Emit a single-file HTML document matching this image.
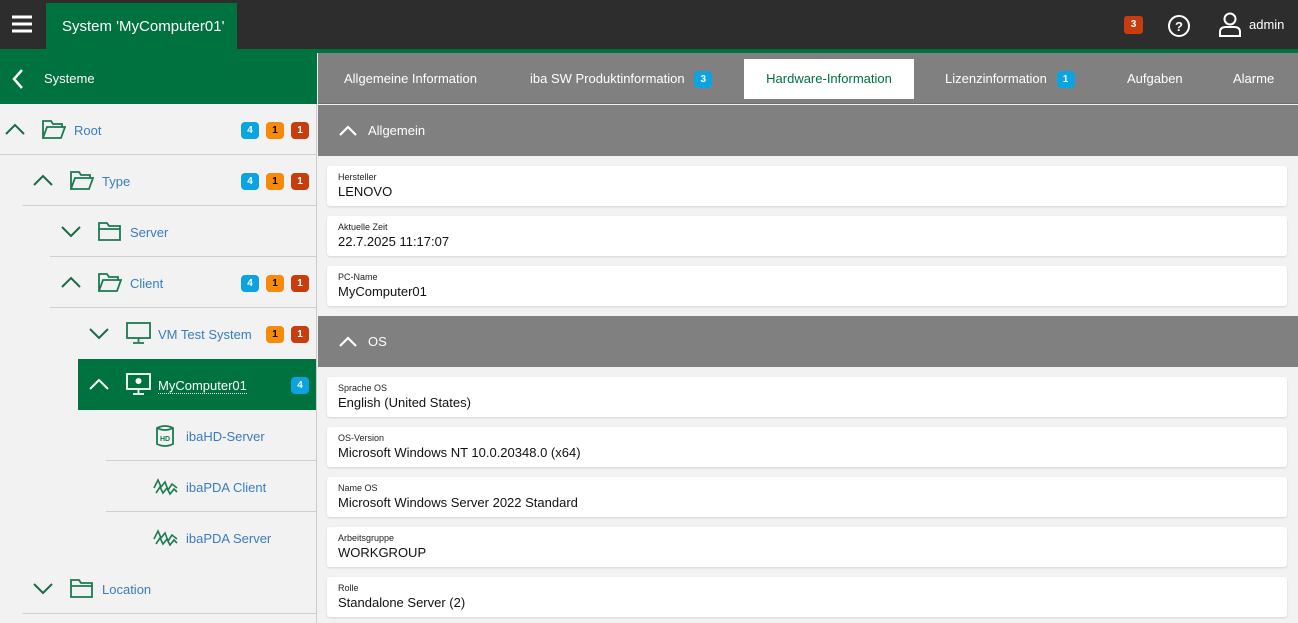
<!DOCTYPE html>
<html><head><meta charset="utf-8"><style>
*{box-sizing:border-box;margin:0;padding:0}
body{width:1298px;height:623px;overflow:hidden;background:#f2f2f2;font-family:"Liberation Sans",sans-serif;position:relative}
.abs{position:absolute}
.top{left:0;top:0;width:1298px;height:49px;background:#2d2d2d}
.gl{left:0;top:49px;width:1298px;height:4px;background:#00723f}
.ttab{left:46px;top:3px;width:191px;height:47px;background:#00723f;color:#fff;font-size:15px;line-height:47px;padding-left:16px}
.sh{left:0;top:53px;width:317px;height:51px;background:#00723f;color:#fff;font-size:13px}
.side{left:0;top:104px;width:317px;height:519px;background:#f2f2f2;border-right:1px solid #ccc}
.row{position:absolute;height:51px;right:0;font-size:13px;color:#3a7cc0}
.row .sep{position:absolute;bottom:0;right:0;height:1px;background:#d0d0d0}
.bd{position:absolute;top:18px;width:18px;height:17px;border-radius:4px;font-size:10px;font-weight:bold;text-align:center;line-height:17px}
.b4{background:#0ba3e0;color:#fff}.bo{background:#f7890b;color:#000}.br{background:#c73d0d;color:#fff}
.tabs{left:318px;top:53px;width:980px;height:51px;background:#808080;border-bottom:1px solid #6e6e6e}
.tab{position:absolute;top:6px;height:40px;line-height:40px;color:#fff;font-size:13px}
.sec{left:318px;width:980px;height:51px;background:#808080;color:#fff;font-size:13px}
.card{left:327px;width:960px;height:40px;background:#fff;border-radius:3px;box-shadow:0 1px 2px rgba(0,0,0,.12)}
.card .l{position:absolute;left:11px;top:6px;font-size:9px;color:#222}
.card .v{position:absolute;left:11px;top:18px;font-size:13px;color:#111}
</style></head><body>
<div class="abs top"></div>
<svg class="abs" style="left:11px;top:15px" width="22" height="18"><g stroke="#fff" stroke-width="3"><line x1="1" y1="2" x2="21" y2="2"/><line x1="1" y1="9" x2="21" y2="9"/><line x1="1" y1="16" x2="21" y2="16"/></g></svg>
<div class="abs ttab">System 'MyComputer01'</div>
<div class="abs" style="left:1124px;top:16px;width:19px;height:18px;background:#c73d0d;border-radius:3px;color:#fff;font-size:10px;font-weight:bold;text-align:center;line-height:18px">3</div>
<svg class="abs" style="left:1167px;top:14px" width="24" height="24"><circle cx="12" cy="12" r="10" fill="none" stroke="#fff" stroke-width="2"/><text x="12" y="17" fill="#fff" font-size="13" font-weight="bold" text-anchor="middle" font-family="Liberation Sans">?</text></svg>
<svg class="abs" style="left:1218px;top:12px" width="24" height="26"><circle cx="12" cy="7" r="5.5" fill="none" stroke="#fff" stroke-width="2"/><path d="M2 24 V20 Q2 15 8 15 H16 Q22 15 22 20 V24 Z" fill="none" stroke="#fff" stroke-width="2"/></svg>
<div class="abs" style="left:1249px;top:17px;color:#fff;font-size:13px">admin</div>
<div class="abs gl"></div>
<div class="abs sh"><svg class="abs" style="left:12px;top:15px" width="12" height="22"><path d="M10 2 L2 11 L10 20" fill="none" stroke="#fff" stroke-width="2.5"/></svg><span class="abs" style="left:44px;top:18px">Systeme</span></div>
<div class="abs side">
<div class="row" style="left:0;top:0"><div class="sep" style="left:0"></div>
<svg class="abs" style="left:5px;top:19px" width="20" height="12"><path d="M1 11 L10 2 L19 11" fill="none" stroke="#1a6a45" stroke-width="2"/></svg>
<svg class="abs" style="left:42px;top:15px" width="24" height="21"><path d="M1 19 V2 H9 L11 5 H20 V8 M1 19 L5 8 H23 L19 19 Z" fill="none" stroke="#1a7a50" stroke-width="1.8"/></svg>
<span class="abs" style="left:74px;top:19px">Root</span>
<div class="bd b4" style="left:241px">4</div><div class="bd bo" style="left:266px">1</div><div class="bd br" style="left:291px">1</div></div>
<div class="row" style="left:0;top:51px"><div class="sep" style="left:22px"></div>
<svg class="abs" style="left:33px;top:19px" width="20" height="12"><path d="M1 11 L10 2 L19 11" fill="none" stroke="#1a6a45" stroke-width="2"/></svg>
<svg class="abs" style="left:70px;top:15px" width="24" height="21"><path d="M1 19 V2 H9 L11 5 H20 V8 M1 19 L5 8 H23 L19 19 Z" fill="none" stroke="#1a7a50" stroke-width="1.8"/></svg>
<span class="abs" style="left:102px;top:19px">Type</span>
<div class="bd b4" style="left:241px">4</div><div class="bd bo" style="left:266px">1</div><div class="bd br" style="left:291px">1</div></div>
<div class="row" style="left:0;top:102px"><div class="sep" style="left:50px"></div>
<svg class="abs" style="left:61px;top:20px" width="20" height="12"><path d="M1 1 L10 10 L19 1" fill="none" stroke="#1a6a45" stroke-width="2"/></svg>
<svg class="abs" style="left:98px;top:15px" width="24" height="21"><path d="M1 19 V2 H9 L11 5 H22 V19 Z M1 8 H22" fill="none" stroke="#1a7a50" stroke-width="1.8"/></svg>
<span class="abs" style="left:130px;top:19px">Server</span></div>
<div class="row" style="left:0;top:153px"><div class="sep" style="left:50px"></div>
<svg class="abs" style="left:61px;top:19px" width="20" height="12"><path d="M1 11 L10 2 L19 11" fill="none" stroke="#1a6a45" stroke-width="2"/></svg>
<svg class="abs" style="left:98px;top:15px" width="24" height="21"><path d="M1 19 V2 H9 L11 5 H20 V8 M1 19 L5 8 H23 L19 19 Z" fill="none" stroke="#1a7a50" stroke-width="1.8"/></svg>
<span class="abs" style="left:130px;top:19px">Client</span>
<div class="bd b4" style="left:241px">4</div><div class="bd bo" style="left:266px">1</div><div class="bd br" style="left:291px">1</div></div>
<div class="row" style="left:0;top:204px">
<svg class="abs" style="left:89px;top:20px" width="20" height="12"><path d="M1 1 L10 10 L19 1" fill="none" stroke="#1a6a45" stroke-width="2"/></svg>
<svg class="abs" style="left:126px;top:14px" width="26" height="22"><rect x="1" y="1" width="23" height="15" fill="none" stroke="#1a7a50" stroke-width="1.8"/><path d="M12.5 16 V20 M7 21 H18" stroke="#1a7a50" stroke-width="1.8"/></svg>
<span class="abs" style="left:158px;top:19px">VM Test System</span>
<div class="bd bo" style="left:266px">1</div><div class="bd br" style="left:291px">1</div></div>
<div class="row" style="left:78px;top:255px;background:#00723f;color:#fff">
<svg class="abs" style="left:11px;top:19px" width="20" height="12"><path d="M1 11 L10 2 L19 11" fill="none" stroke="#fff" stroke-width="2"/></svg>
<svg class="abs" style="left:48px;top:14px" width="26" height="22"><rect x="1" y="1" width="23" height="15" fill="none" stroke="#fff" stroke-width="1.8"/><circle cx="12.5" cy="8" r="3" fill="#fff"/><path d="M12.5 16 V20 M7 21 H18" stroke="#fff" stroke-width="1.8"/></svg>
<span class="abs" style="left:80px;top:19px;border-bottom:1px dotted #fff">MyComputer01</span>
<div class="bd b4" style="left:213px">4</div></div>
<div class="row" style="left:0;top:306px"><div class="sep" style="left:106px"></div>
<svg class="abs" style="left:155px;top:14px" width="20" height="24"><path d="M2 4 Q10 0 18 4 V20 Q10 24 2 20 Z M2 4 Q10 8 18 4" fill="none" stroke="#1a7a50" stroke-width="1.8"/><text x="10" y="17" font-size="7" font-weight="bold" fill="#1a7a50" text-anchor="middle" font-family="Liberation Sans">HD</text></svg>
<span class="abs" style="left:186px;top:19px">ibaHD-Server</span></div>
<div class="row" style="left:0;top:357px"><div class="sep" style="left:106px"></div>
<svg class="abs" style="left:153px;top:17px" width="26" height="18"><path d="M1 10 L5 2 L8 9 L12 4 L15 12 L19 6 L24 10 M3 15 L7 9 L10 15 L14 10 L17 16 L21 11 L24 14" fill="none" stroke="#1a7a50" stroke-width="1.6"/></svg>
<span class="abs" style="left:186px;top:19px">ibaPDA Client</span></div>
<div class="row" style="left:0;top:408px">
<svg class="abs" style="left:153px;top:17px" width="26" height="18"><path d="M1 10 L5 2 L8 9 L12 4 L15 12 L19 6 L24 10 M3 15 L7 9 L10 15 L14 10 L17 16 L21 11 L24 14" fill="none" stroke="#1a7a50" stroke-width="1.6"/></svg>
<span class="abs" style="left:186px;top:19px">ibaPDA Server</span></div>
<div class="row" style="left:0;top:459px"><div class="sep" style="left:22px"></div>
<svg class="abs" style="left:33px;top:20px" width="20" height="12"><path d="M1 1 L10 10 L19 1" fill="none" stroke="#1a6a45" stroke-width="2"/></svg>
<svg class="abs" style="left:70px;top:15px" width="24" height="21"><path d="M1 19 V2 H9 L11 5 H22 V19 Z M1 8 H22" fill="none" stroke="#1a7a50" stroke-width="1.8"/></svg>
<span class="abs" style="left:102px;top:19px">Location</span></div>
</div>
<div class="abs tabs">
<div class="tab" style="left:26px">Allgemeine Information</div>
<div class="tab" style="left:212px">iba SW Produktinformation <span style="display:inline-block;background:#0ba3e0;border-radius:4px;width:18px;height:17px;line-height:17px;text-align:center;font-size:10px;font-weight:bold;margin-left:6px;vertical-align:middle">3</span></div>
<div class="tab" style="left:426px;width:170px;background:#fff;color:#00723f;text-align:center">Hardware-Information</div>
<div class="tab" style="left:627px">Lizenzinformation <span style="display:inline-block;background:#0ba3e0;border-radius:4px;width:18px;height:17px;line-height:17px;text-align:center;font-size:10px;font-weight:bold;margin-left:6px;vertical-align:middle">1</span></div>
<div class="tab" style="left:809px">Aufgaben</div>
<div class="tab" style="left:915px">Alarme</div>
</div>
<div class="abs sec" style="top:105px"><svg class="abs" style="left:21px;top:20px" width="18" height="11"><path d="M1 10 L9 2 L17 10" fill="none" stroke="#fff" stroke-width="2.2"/></svg><span class="abs" style="left:50px;top:18px">Allgemein</span></div>
<div class="abs card" style="top:166px"><div class="l">Hersteller</div><div class="v">LENOVO</div></div>
<div class="abs card" style="top:216px"><div class="l">Aktuelle Zeit</div><div class="v">22.7.2025 11:17:07</div></div>
<div class="abs card" style="top:266px"><div class="l">PC-Name</div><div class="v">MyComputer01</div></div>
<div class="abs sec" style="top:316px"><svg class="abs" style="left:21px;top:20px" width="18" height="11"><path d="M1 10 L9 2 L17 10" fill="none" stroke="#fff" stroke-width="2.2"/></svg><span class="abs" style="left:50px;top:18px">OS</span></div>
<div class="abs card" style="top:377px"><div class="l">Sprache OS</div><div class="v">English (United States)</div></div>
<div class="abs card" style="top:427px"><div class="l">OS-Version</div><div class="v">Microsoft Windows NT 10.0.20348.0 (x64)</div></div>
<div class="abs card" style="top:477px"><div class="l">Name OS</div><div class="v">Microsoft Windows Server 2022 Standard</div></div>
<div class="abs card" style="top:527px"><div class="l">Arbeitsgruppe</div><div class="v">WORKGROUP</div></div>
<div class="abs card" style="top:577px"><div class="l">Rolle</div><div class="v">Standalone Server (2)</div></div>
</body></html>
